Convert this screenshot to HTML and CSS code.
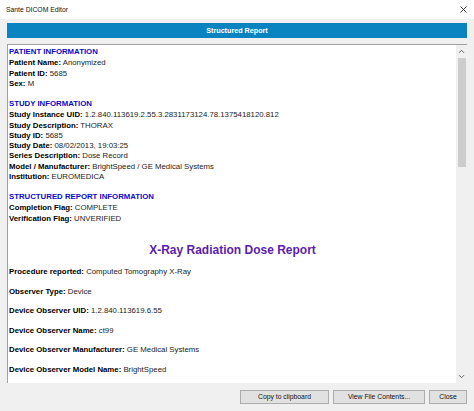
FILE: index.html
```html
<!DOCTYPE html>
<html>
<head>
<meta charset="utf-8">
<link rel="stylesheet" href="styles.css">
</head>
<body>
<div class="titlebar">
  <span class="app-title">Sante DICOM Editor</span>
  <svg class="close-x" width="7" height="7" viewBox="0 0 7 7"><path d="M0.5 0.5 L6.5 6.5 M6.5 0.5 L0.5 6.5" stroke="#222" stroke-width="0.9" fill="none"/></svg>
</div>
<div class="window">
  <div class="header">Structured Report</div>
  <div class="report-box">
    <div class="report">
      <div class="section">
        <div class="sec-title">PATIENT INFORMATION</div>
        <div class="row"><b>Patient Name:</b> Anonymized</div>
        <div class="row"><b>Patient ID:</b> 5685</div>
        <div class="row"><b>Sex:</b> M</div>
      </div>
      <div class="section">
        <div class="sec-title">STUDY INFORMATION</div>
        <div class="row"><b>Study Instance UID:</b> 1.2.840.113619.2.55.3.2831173124.78.1375418120.812</div>
        <div class="row"><b>Study Description:</b> THORAX</div>
        <div class="row"><b>Study ID:</b> 5685</div>
        <div class="row"><b>Study Date:</b> 08/02/2013, 19:03:25</div>
        <div class="row"><b>Series Description:</b> Dose Record</div>
        <div class="row"><b>Model / Manufacturer:</b> BrightSpeed / GE Medical Systems</div>
        <div class="row"><b>Institution:</b> EUROMEDICA</div>
      </div>
      <div class="section last">
        <div class="sec-title">STRUCTURED REPORT INFORMATION</div>
        <div class="row"><b>Completion Flag:</b> COMPLETE</div>
        <div class="row"><b>Verification Flag:</b> UNVERIFIED</div>
      </div>
      <div class="dose-title">X-Ray Radiation Dose Report</div>
      <div class="dose-row"><b>Procedure reported:</b> Computed Tomography X-Ray</div>
      <div class="dose-row"><b>Observer Type:</b> Device</div>
      <div class="dose-row"><b>Device Observer UID:</b> 1.2.840.113619.6.55</div>
      <div class="dose-row"><b>Device Observer Name:</b> ct99</div>
      <div class="dose-row"><b>Device Observer Manufacturer:</b> GE Medical Systems</div>
      <div class="dose-row"><b>Device Observer Model Name:</b> BrightSpeed</div>
    </div>
    <div class="scrollbar">
      <div class="arrow">
        <svg width="7" height="5" viewBox="0 0 7 5"><path d="M1 3.8 L3.5 1.3 L6 3.8" stroke="#606060" stroke-width="1" fill="none"/></svg>
      </div>
      <div class="thumb"></div>
      <div class="track"></div>
      <div class="arrow">
        <svg width="7" height="5" viewBox="0 0 7 5"><path d="M1 1.2 L3.5 3.7 L6 1.2" stroke="#606060" stroke-width="1" fill="none"/></svg>
      </div>
    </div>
  </div>
  <div class="buttons">
    <button class="btn btn-copy">Copy to clipboard</button>
    <button class="btn btn-view">View File Contents...</button>
    <button class="btn btn-close">Close</button>
  </div>
</div>
</body>
</html>
```
FILE: styles.css
```css
html, body {
  margin: 0;
  padding: 0;
}
body {
  width: 474px;
  height: 411px;
  overflow: hidden;
  background: #f0f0f0;
  font-family: "Liberation Sans", Arial, sans-serif;
  color: #000;
}
.titlebar {
  height: 19px;
  background: #fff;
  display: flex;
  align-items: center;
  justify-content: space-between;
  padding: 0 7px 0 6px;
}
.app-title {
  font-size: 6.8px;
  color: #111;
}
.close-x {
  display: block;
}
.window {
  padding: 4px 7px 7px 7px;
  display: flex;
  flex-direction: column;
}
.header {
  height: 15px;
  line-height: 15px;
  background: #0a83c1;
  color: #fff;
  font-weight: bold;
  font-size: 7.2px;
  text-align: center;
}
.report-box {
  margin-top: 6px;
  height: 339px;
  box-sizing: border-box;
  border-top: 1px solid #a0a0a0;
  border-left: 1px solid #a0a0a0;
  display: flex;
  background: #fff;
}
.report {
  flex: 1;
  overflow: hidden;
  padding: 1.3px 0 0 1px;
  font-size: 7.8px;
  color: #222;
}
.report b {
  color: #000;
}
.section {
  margin-bottom: 9.1px;
}
.section.last {
  margin-bottom: 0;
}
.sec-title {
  line-height: 12px;
  font-weight: bold;
  color: #0a0acc;
}
.row {
  line-height: 10.3px;
  white-space: nowrap;
}
.dose-title {
  margin-top: 18.7px;
  line-height: 15px;
  font-size: 12px;
  font-weight: bold;
  color: #5d1db0;
  text-align: center;
  margin-bottom: 2.35px;
}
.dose-row {
  line-height: 10.3px;
  margin-top: 9.3px;
  white-space: nowrap;
}
.scrollbar {
  width: 11px;
  background: #f0f0f0;
  display: flex;
  flex-direction: column;
}
.arrow {
  height: 13px;
  display: flex;
  align-items: center;
  justify-content: center;
}
.arrow svg {
  display: block;
}
.thumb {
  height: 109px;
  width: 8px;
  margin-left: 1.5px;
  background: #cdcdcd;
}
.track {
  flex: 1;
}
.buttons {
  margin-top: 7px;
  display: flex;
  justify-content: flex-end;
  gap: 4px;
}
.btn {
  height: 14px;
  margin: 0;
  padding: 0;
  box-sizing: border-box;
  background: #e1e1e1;
  border: 1px solid #adadad;
  font-family: "Liberation Sans", Arial, sans-serif;
  font-size: 6.8px;
  color: #111;
  line-height: 12px;
}
.btn-copy { width: 89px; }
.btn-view { width: 92px; }
.btn-close { width: 38px; }
```
